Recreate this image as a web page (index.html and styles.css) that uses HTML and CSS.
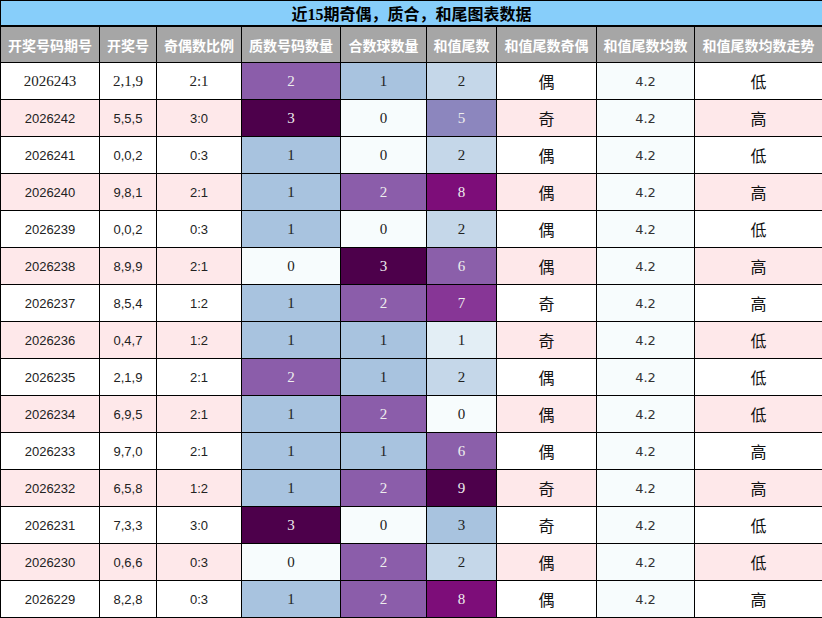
FILE: index.html
```html
<!DOCTYPE html>
<html lang="zh">
<head>
<meta charset="utf-8">
<title>近15期奇偶，质合，和尾图表数据</title>
<link rel="stylesheet" href="styles.css">
</head>
<body>
<table class="chart">
  <colgroup>
    <col class="c1"><col class="c2"><col class="c3"><col class="c4"><col class="c5"><col class="c6"><col class="c7"><col class="c8"><col class="c9">
  </colgroup>
  <thead>
    <tr class="title-row"><th colspan="9">近15期奇偶，质合，和尾图表数据</th></tr>
    <tr class="head-row">
      <th>开奖号码期号</th><th>开奖号</th><th>奇偶数比例</th><th>质数号码数量</th><th>合数球数量</th><th>和值尾数</th><th>和值尾数奇偶</th><th>和值尾数均数</th><th>和值尾数均数走势</th>
    </tr>
  </thead>
  <tbody>
    <tr class="first"><td>2026243</td><td>2,1,9</td><td>2:1</td><td class="num v2 lt">2</td><td class="num v1">1</td><td class="num t2">2</td><td class="cj">偶</td><td class="avg">4.2</td><td class="cj">低</td></tr>
    <tr class="pink"><td class="sn">2026242</td><td class="sn">5,5,5</td><td class="sn">3:0</td><td class="num v3 lt">3</td><td class="num v0">0</td><td class="num t5 lt">5</td><td class="cj">奇</td><td class="avg">4.2</td><td class="cj">高</td></tr>
    <tr><td class="sn">2026241</td><td class="sn">0,0,2</td><td class="sn">0:3</td><td class="num v1">1</td><td class="num v0">0</td><td class="num t2">2</td><td class="cj">偶</td><td class="avg">4.2</td><td class="cj">低</td></tr>
    <tr class="pink"><td class="sn">2026240</td><td class="sn">9,8,1</td><td class="sn">2:1</td><td class="num v1">1</td><td class="num v2 lt">2</td><td class="num t8 lt">8</td><td class="cj">偶</td><td class="avg">4.2</td><td class="cj">高</td></tr>
    <tr><td class="sn">2026239</td><td class="sn">0,0,2</td><td class="sn">0:3</td><td class="num v1">1</td><td class="num v0">0</td><td class="num t2">2</td><td class="cj">偶</td><td class="avg">4.2</td><td class="cj">低</td></tr>
    <tr class="pink"><td class="sn">2026238</td><td class="sn">8,9,9</td><td class="sn">2:1</td><td class="num v0">0</td><td class="num v3 lt">3</td><td class="num t6 lt">6</td><td class="cj">偶</td><td class="avg">4.2</td><td class="cj">高</td></tr>
    <tr><td class="sn">2026237</td><td class="sn">8,5,4</td><td class="sn">1:2</td><td class="num v1">1</td><td class="num v2 lt">2</td><td class="num t7 lt">7</td><td class="cj">奇</td><td class="avg">4.2</td><td class="cj">高</td></tr>
    <tr class="pink"><td class="sn">2026236</td><td class="sn">0,4,7</td><td class="sn">1:2</td><td class="num v1">1</td><td class="num v1">1</td><td class="num t1">1</td><td class="cj">奇</td><td class="avg">4.2</td><td class="cj">低</td></tr>
    <tr><td class="sn">2026235</td><td class="sn">2,1,9</td><td class="sn">2:1</td><td class="num v2 lt">2</td><td class="num v1">1</td><td class="num t2">2</td><td class="cj">偶</td><td class="avg">4.2</td><td class="cj">低</td></tr>
    <tr class="pink"><td class="sn">2026234</td><td class="sn">6,9,5</td><td class="sn">2:1</td><td class="num v1">1</td><td class="num v2 lt">2</td><td class="num t0">0</td><td class="cj">偶</td><td class="avg">4.2</td><td class="cj">低</td></tr>
    <tr><td class="sn">2026233</td><td class="sn">9,7,0</td><td class="sn">2:1</td><td class="num v1">1</td><td class="num v1">1</td><td class="num t6 lt">6</td><td class="cj">偶</td><td class="avg">4.2</td><td class="cj">高</td></tr>
    <tr class="pink"><td class="sn">2026232</td><td class="sn">6,5,8</td><td class="sn">1:2</td><td class="num v1">1</td><td class="num v2 lt">2</td><td class="num t9 lt">9</td><td class="cj">奇</td><td class="avg">4.2</td><td class="cj">高</td></tr>
    <tr><td class="sn">2026231</td><td class="sn">7,3,3</td><td class="sn">3:0</td><td class="num v3 lt">3</td><td class="num v0">0</td><td class="num t3">3</td><td class="cj">奇</td><td class="avg">4.2</td><td class="cj">低</td></tr>
    <tr class="pink"><td class="sn">2026230</td><td class="sn">0,6,6</td><td class="sn">0:3</td><td class="num v0">0</td><td class="num v2 lt">2</td><td class="num t2">2</td><td class="cj">偶</td><td class="avg">4.2</td><td class="cj">低</td></tr>
    <tr><td class="sn">2026229</td><td class="sn">8,2,8</td><td class="sn">0:3</td><td class="num v1">1</td><td class="num v2 lt">2</td><td class="num t8 lt">8</td><td class="cj">偶</td><td class="avg">4.2</td><td class="cj">高</td></tr>
  </tbody>
</table>
</body>
</html>
```
FILE: styles.css
```css
html, body {
  margin: 0;
  padding: 0;
  background: #ffffff;
}

.chart {
  width: 822px;
  table-layout: fixed;
  border-collapse: collapse;
  font-family: "Liberation Serif", "Noto Sans CJK SC", serif;
  font-size: 15px;
  color: #222;
}

.c1 { width: 99px; }
.c2 { width: 57px; }
.c3 { width: 85px; }
.c4 { width: 99px; }
.c5 { width: 86px; }
.c6 { width: 70px; }
.c7 { width: 100px; }
.c8 { width: 98px; }
.c9 { width: 128px; }

.chart th,
.chart td {
  border: 1px solid #000;
  padding: 0;
  text-align: center;
  vertical-align: middle;
  white-space: nowrap;
  overflow: hidden;
}

.title-row th {
  height: 24px;
  background: #87cefa;
  color: #000;
  font-family: "Liberation Serif", "Noto Sans CJK SC", serif;
  font-size: 16px;
  font-weight: bold;
  border-bottom: 2px solid #000;
}

.head-row th {
  height: 35px;
  background: #a6a6a6;
  color: #fff;
  font-family: "Noto Sans CJK SC", sans-serif;
  font-size: 14px;
  font-weight: bold;
}

.chart tbody td {
  height: 36px;
  background: #ffffff;
}

.chart tbody tr.pink td {
  background: #fee8ea;
}

.chart tbody td.sn {
  font-family: "Liberation Sans", "Noto Sans CJK SC", sans-serif;
  font-size: 13px;
}

.chart tbody td.cj {
  font-family: "Noto Sans CJK SC", sans-serif;
  font-size: 16px;
  color: #111;
}

.chart tbody td.avg,
.chart tbody tr.pink td.avg {
  background: #f7fcfd;
  font-family: "DejaVu Sans", "Noto Sans CJK SC", sans-serif;
  font-size: 13px;
  color: #333;
}

.chart tbody td.num { font-size: 15px; }
.chart tbody td.lt { color: #eeeeee; }

/* count colour scale (0..3) */
.chart tbody td.v0, .chart tbody tr.pink td.v0 { background: #f7fcfd; }
.chart tbody td.v1, .chart tbody tr.pink td.v1 { background: #a8c3df; }
.chart tbody td.v2, .chart tbody tr.pink td.v2 { background: #8b5daa; }
.chart tbody td.v3, .chart tbody tr.pink td.v3 { background: #4d004b; }

/* tail colour scale (0..9) */
.chart tbody td.t0, .chart tbody tr.pink td.t0 { background: #f7fcfd; }
.chart tbody td.t1, .chart tbody tr.pink td.t1 { background: #e3eef5; }
.chart tbody td.t2, .chart tbody tr.pink td.t2 { background: #c5d7e9; }
.chart tbody td.t3, .chart tbody tr.pink td.t3 { background: #a8c3df; }
.chart tbody td.t5, .chart tbody tr.pink td.t5 { background: #8c86be; }
.chart tbody td.t6, .chart tbody tr.pink td.t6 { background: #8b5faa; }
.chart tbody td.t7, .chart tbody tr.pink td.t7 { background: #873696; }
.chart tbody td.t8, .chart tbody tr.pink td.t8 { background: #7d0d79; }
.chart tbody td.t9, .chart tbody tr.pink td.t9 { background: #4d004b; }
```
